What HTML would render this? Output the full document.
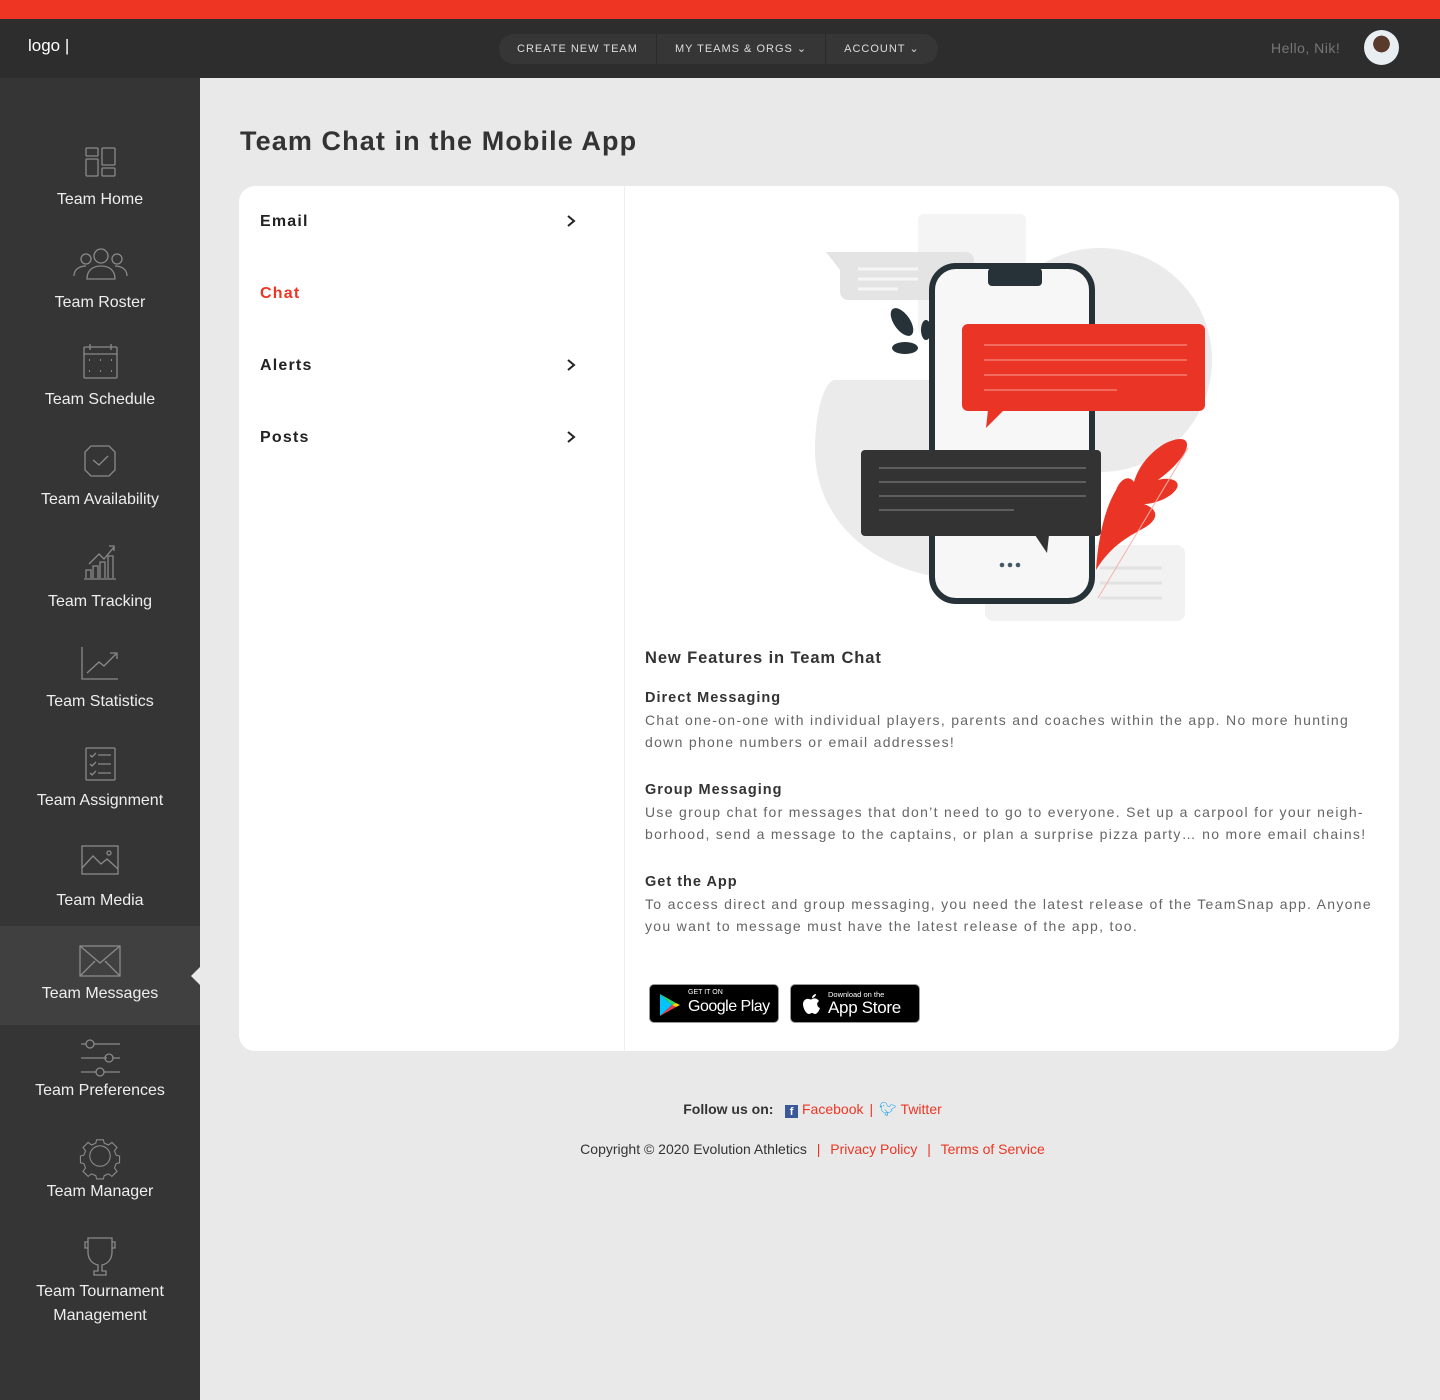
<!DOCTYPE html>
<html><head><meta charset="utf-8"><style>
*{margin:0;padding:0;box-sizing:border-box}
body{width:1440px;height:1400px;background:#e9e9e9;font-family:"Liberation Sans",sans-serif;position:relative;overflow:hidden}
.top{position:absolute;left:0;top:0;width:1440px;height:19px;background:#ee3524}
.hdr{position:absolute;left:0;top:19px;width:1440px;height:59px;background:#2d2d2d}
.logo{position:absolute;left:28px;top:17px;color:#fff;font-size:17px}
.nav{position:absolute;left:499px;top:15px;height:30px;background:#363636;border-radius:15px;display:flex}
.nav div{color:#ddd;font-size:11px;letter-spacing:1px;line-height:30px;padding:0 18px;border-right:1px solid #2a2a2a}
.nav div:last-child{border:none}
.hello{position:absolute;left:1271px;top:21px;color:#777;font-size:14px;letter-spacing:.5px}
.av{position:absolute;left:1364px;top:11px;width:35px;height:35px;border-radius:50%;background:radial-gradient(circle at 50% 40%,#5a3a2a 0 30%,#e8eef2 31%)}
.side{position:absolute;left:0;top:78px;width:200px;height:1322px;background:#353535}
.act{position:absolute;left:0;top:926px;width:200px;height:99px;background:#404040}
.notch{position:absolute;left:191px;top:966px;width:0;height:0;border-top:10px solid transparent;border-bottom:10px solid transparent;border-right:10px solid #e9e9e9}
.lbl{position:absolute;left:0;width:200px;text-align:center;color:#eee;font-size:16px;line-height:24px}
h1{position:absolute;left:240px;top:126px;font-size:27px;color:#333;letter-spacing:1.1px;font-weight:bold}
.card{position:absolute;left:239px;top:186px;width:1160px;height:865px;background:#fff;border-radius:16px}
.div{position:absolute;left:385px;top:0;width:1px;height:865px;background:#eee}
.mi{position:absolute;left:21px;font-size:16px;font-weight:bold;letter-spacing:1.2px;color:#222}
.chev{position:absolute;left:326px;width:12px;height:12px}
.txt{position:absolute;left:406px;width:740px;color:#666;font-size:14px;letter-spacing:1.3px;line-height:22px}
.txt b{display:block;color:#333;font-size:14.5px;letter-spacing:1px;font-weight:600}
.badge{position:absolute;top:798px;height:39px;width:130px;background:#000;border:1px solid #999;border-radius:5px;color:#fff}
.foot{position:absolute;left:0;width:1440px;padding-left:185px;text-align:center;font-size:14px;color:#333}
.foot a{color:#ee3524;text-decoration:none}
.foot .s{color:#ee3524;margin:0 6px}
</style></head><body>
<div class="top"></div>
<div class="hdr">
<div class="logo">logo <span style="font-weight:300">|</span></div>
<div class="nav"><div>CREATE NEW TEAM</div><div>MY TEAMS &amp; ORGS ⌄</div><div>ACCOUNT ⌄</div></div>
<div class="hello">Hello, Nik!</div>
<div class="av"></div>
</div>
<div class="side"></div>
<div class="act"></div>
<div class="notch"></div>
<svg style="position:absolute;left:0;top:0" width="200" height="1400" fill="none" stroke="#8a8a8a" stroke-width="1.3">
<rect x="86" y="148" width="12" height="8" rx="1"/><rect x="86" y="159" width="12" height="17" rx="1"/><rect x="102" y="148" width="13" height="17" rx="1"/><rect x="102" y="168" width="13" height="8" rx="1"/>
<circle cx="86" cy="259" r="5"/><circle cx="117" cy="259" r="5"/><circle cx="101" cy="256" r="7"/><path d="M74 276c0-7 6-10 12-10M127 276c0-7-6-10-12-10M87 279c0-9 6-13 14-13s14 4 14 13z"/>
<rect x="84" y="347" width="33" height="31" rx="1"/><path d="M84 354h33M90 344v6M111 344v6"/><path d="M89 360h1M100 360h1M111 360h1M89 371h1M100 371h1M111 371h1" stroke-width="2"/>
<path d="M91 446h18l6 6v18l-6 6h-18l-6-6v-18z"/><path d="M93 460l6 5 9-9"/>
<path d="M84 579h32M86 578v-8h5v8M93 578v-12h5v12M100 578v-16h5v16M108 578v-22h5v22M89 564l10-10 5 5 10-12M109 546h5v5"/>
<path d="M82 647v32h36M87 673l12-11 5 4 12-12M110 653h7v6"/>
<rect x="86" y="748" width="29" height="32" rx="1"/><path d="M90 755l2 2 4-4M98 755h13M90 764l2 2 4-4M98 764h13M90 773l2 2 4-4M98 773h13"/>
<rect x="82" y="846" width="36" height="28"/><path d="M82 868l11-12 8 8 6-5 11 10"/><circle cx="109" cy="853" r="2"/>
<rect x="80" y="946" width="40" height="30"/><path d="M80 946l20 17 20-17M80 976l15-15M120 976l-15-15"/>
<path d="M81 1044h5M94 1044h26M81 1058h26M113 1058h7M81 1072h15M104 1072h16"/><circle cx="90" cy="1044" r="4"/><circle cx="109" cy="1058" r="4"/><circle cx="100" cy="1072" r="4"/>
<g transform="translate(100 1156) scale(0.85) translate(-100 -1156)"><circle cx="100" cy="1156" r="12"/><path d="M96 1137h8l1 4 5 2 4-3 6 6-3 4 2 5 4 1v8l-4 1-2 5 3 4-6 6-4-3-5 2-1 4h-8l-1-4-5-2-4 3-6-6 3-4-2-5-4-1v-8l4-1 2-5-3-4 6-6 4 3 5-2z"/></g>
<path d="M88 1238h24v14c0 8-5 12-10 13v6h4v4h-12v-4h4v-6c-5-1-10-5-10-13z M88 1242h-3v6h3M112 1242h3v6h-3"/>
</svg>
<div class="lbl" style="top:188px">Team Home</div>
<div class="lbl" style="top:291px">Team Roster</div>
<div class="lbl" style="top:388px">Team Schedule</div>
<div class="lbl" style="top:488px">Team Availability</div>
<div class="lbl" style="top:590px">Team Tracking</div>
<div class="lbl" style="top:690px">Team Statistics</div>
<div class="lbl" style="top:789px">Team Assignment</div>
<div class="lbl" style="top:889px">Team Media</div>
<div class="lbl" style="top:982px">Team Messages</div>
<div class="lbl" style="top:1079px">Team Preferences</div>
<div class="lbl" style="top:1180px">Team Manager</div>
<div class="lbl" style="top:1280px">Team Tournament<br>Management</div>

<h1>Team Chat in the Mobile App</h1>
<div class="card">
<div class="div"></div>
<div class="mi" style="top:27px">Email</div>
<div class="mi" style="top:99px;color:#ee3524">Chat</div>
<div class="mi" style="top:171px">Alerts</div>
<div class="mi" style="top:243px">Posts</div>
<svg class="chev" style="top:29px" viewBox="0 0 12 12"><path d="M3 1l6 5-6 5" stroke="#222" stroke-width="2" fill="none"/></svg>
<svg class="chev" style="top:173px" viewBox="0 0 12 12"><path d="M3 1l6 5-6 5" stroke="#222" stroke-width="2" fill="none"/></svg>
<svg class="chev" style="top:245px" viewBox="0 0 12 12"><path d="M3 1l6 5-6 5" stroke="#222" stroke-width="2" fill="none"/></svg>

<svg style="position:absolute;left:561px;top:14px" width="440" height="430" viewBox="800 200 440 430">
<rect x="918" y="214" width="108" height="120" rx="6" fill="#f4f4f4"/>
<circle cx="1100" cy="360" r="112" fill="#ebebeb"/>
<path d="M835 380h140v200c-100 0-160-60-160-130 0-40 10-70 20-70z" fill="#ebebeb"/>
<path d="M826 252h140a8 8 0 0 1 8 8v32a8 8 0 0 1-8 8h-118a8 8 0 0 1-8-8v-22z" fill="#e4e4e4"/>
<path d="M858 269h60M858 279h60M858 289h40" stroke="#f6f6f6" stroke-width="3"/>
<rect x="985" y="545" width="200" height="76" rx="8" fill="#f2f2f2"/>
<path d="M1100 568h62M1100 583h62M1100 598h62" stroke="#e2e2e2" stroke-width="3"/>
<rect x="932" y="266" width="160" height="335" rx="24" fill="#f7f7f7" stroke="#263238" stroke-width="6"/>
<rect x="988" y="268" width="54" height="18" rx="4" fill="#263238"/>
<ellipse cx="902" cy="322" rx="8" ry="16" transform="rotate(-35 902 322)" fill="#263238"/>
<ellipse cx="905" cy="348" rx="13" ry="6" fill="#263238"/>
<ellipse cx="926" cy="330" rx="5" ry="10" fill="#263238"/>
<path d="M1096 570c2-30 8-60 20-80 4-10 12-16 18-8 4-14 14-28 30-38 20-10 28-4 20 10-8 12-18 20-26 26 14-4 26 2 16 12-8 8-22 12-30 12 16 6 14 16 0 24-14 8-32 16-48 42z" fill="#ea3526"/>
<path d="M1188 448l-90 150" stroke="#f7b0a8" stroke-width="1"/>
<rect x="962" y="324" width="243" height="87" rx="6" fill="#ea3526"/>
<path d="M988 410l-2 18 18-18z" fill="#ea3526"/>
<path d="M984 345h203M984 360h203M984 375h203M984 390h133" stroke="#f58a80" stroke-width="1.2"/>
<rect x="861" y="450" width="240" height="86" rx="4" fill="#333"/>
<path d="M1035 535l12 18 2-18z" fill="#333"/>
<path d="M879 468h207M879 482h207M879 496h207M879 510h135" stroke="#888" stroke-width="1"/>
<circle cx="1002" cy="565" r="2.3" fill="#455a64"/><circle cx="1010" cy="565" r="2.3" fill="#455a64"/><circle cx="1018" cy="565" r="2.3" fill="#455a64"/>
</svg>

<div class="txt" style="top:461px;font-size:16.5px;color:#333;font-weight:600;letter-spacing:.9px">New Features in Team Chat</div>
<div class="txt" style="top:501px"><b>Direct Messaging</b>Chat one-on-one with individual players, parents and coaches within the app. No more hunting down phone numbers or email addresses!</div>
<div class="txt" style="top:593px"><b>Group Messaging</b>Use group chat for messages that don’t need to go to everyone. Set up a carpool for your neigh-borhood, send a message to the captains, or plan a surprise pizza party… no more email chains!</div>
<div class="txt" style="top:685px"><b>Get the App</b>To access direct and group messaging, you need the latest release of the TeamSnap app. Anyone you want to message must have the latest release of the app, too.</div>

<div class="badge" style="left:410px">
<svg style="position:absolute;left:8px;top:8px" width="24" height="24" viewBox="0 0 24 24"><path d="M2 1l12 11L2 23z" fill="#00c3ff"/><path d="M2 1l16 9-4 2z" fill="#34d36b"/><path d="M2 23l16-9-4-2z" fill="#f33a4a"/><path d="M18 10l4 2-4 2-4-2z" fill="#ffd300"/></svg>
<div style="position:absolute;left:38px;top:4px;font-size:7px">GET IT ON</div>
<div style="position:absolute;left:38px;top:13px;font-size:16px;letter-spacing:-.5px">Google Play</div>
</div>
<div class="badge" style="left:551px">
<svg style="position:absolute;left:12px;top:8px" width="18" height="22" viewBox="0 0 18 22"><path d="M9 6c2-1 5-1 7 2-3 2-2 6 1 7-1 3-3 6-5 6-1 0-2-1-3-1s-2 1-3 1c-3 0-6-6-6-10 0-4 4-6 6-5 1 0 2 1 3 0zM9 5c0-2 2-4 4-4 0 2-2 4-4 4z" fill="#fff"/></svg>
<div style="position:absolute;left:37px;top:5px;font-size:7.5px">Download on the</div>
<div style="position:absolute;left:37px;top:13px;font-size:17px;letter-spacing:-.3px">App Store</div>
</div>
</div>

<div class="foot" style="top:1101px"><b>Follow us on:</b> &nbsp; <span style="display:inline-block;width:13px;height:13px;background:#3b5998;color:#fff;font-size:11px;line-height:14px;font-weight:bold;vertical-align:-1px">f</span> <a>Facebook</a><span class="s">|</span><span style="color:#1da1f2">🐦︎</span> <a>Twitter</a></div>
<div class="foot" style="top:1141px">Copyright © 2020 Evolution Athletics <span class="s">|</span> <a>Privacy Policy</a> <span class="s">|</span> <a>Terms of Service</a></div>
</body></html>
